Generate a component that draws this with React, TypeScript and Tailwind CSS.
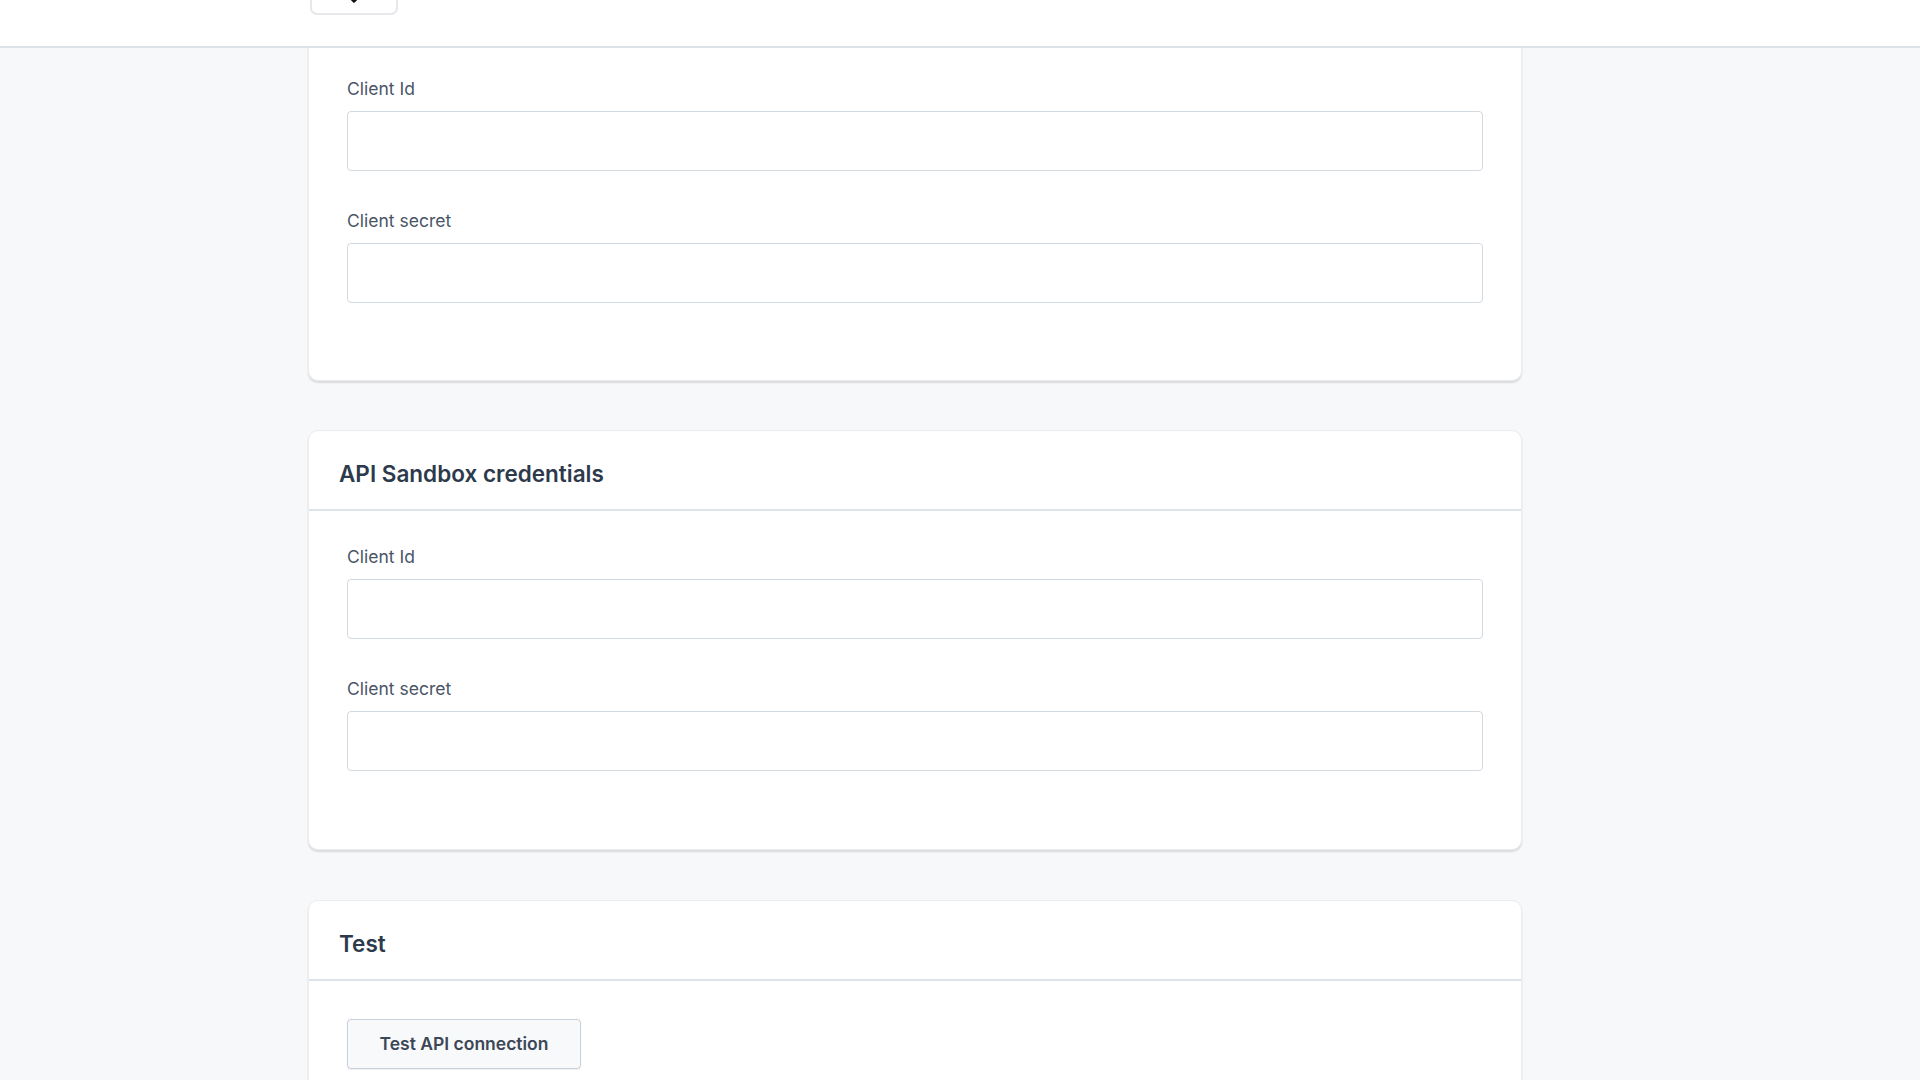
import React from "react";

function Field({ label, first }: { label: string; first?: boolean }) {
  return (
    <div className={first ? "flex flex-col" : "flex flex-col mt-[40px]"}>
      <label className="text-[17.5px] leading-[20px] text-[#4a5568]">{label}</label>
      <input
        type="text"
        className="mt-[12px] h-[60px] w-full rounded-[4px] border border-[#d3d9e1] bg-white outline-none"
      />
    </div>
  );
}

function CardHeader({ title }: { title: string }) {
  return (
    <div className="h-[80px] flex items-center pt-[8px] px-[30px] border-b-2 border-[#dde3ea]">
      <h2 className="text-[22.5px] font-semibold text-[#2d3a4b] leading-none">{title}</h2>
    </div>
  );
}

export default function App() {
  return (
    <div
      className="min-h-screen bg-[#f7f8fa] overflow-hidden"
      style={{ fontFamily: "Inter, 'Noto Sans', sans-serif" }}
    >
      <header className="h-[48px] bg-white border-b-2 border-[#dde2e8] flex items-start pl-[310px] relative z-10">
        <button className="-mt-[22px] w-[88px] h-[37px] rounded-[7px] border-2 border-[#e6e8eb] bg-white flex items-end justify-center pb-[6px]">
          <svg width="14" height="14" viewBox="0 0 24 24" fill="none" stroke="#111" strokeWidth="3.5" strokeLinecap="round" strokeLinejoin="round">
            <path d="M6 9l6 6 6-6" />
          </svg>
        </button>
      </header>
      <main className="w-[1214px] ml-[308px] flex flex-col -mt-[2px]">
        <section className="bg-white border-x border-b border-[#eaecef] rounded-b-[10px] shadow-[0_2px_2px_rgba(0,0,0,0.12)] pt-[33px] pb-[77px] px-[38px]">
          <Field label="Client Id" first />
          <Field label="Client secret" />
        </section>

        <section className="mt-[49px] bg-white border border-[#eaecef] rounded-[10px] shadow-[0_2px_2px_rgba(0,0,0,0.12)]">
          <CardHeader title="API Sandbox credentials" />
          <div className="pt-[36px] pb-[78px] px-[38px]">
            <Field label="Client Id" first />
            <Field label="Client secret" />
          </div>
        </section>

        <section className="mt-[50px] bg-white border border-[#eaecef] rounded-[10px] shadow-[0_2px_2px_rgba(0,0,0,0.12)]">
          <CardHeader title="Test" />
          <div className="pt-[38px] pb-[40px] px-[38px]">
            <button className="w-[234px] h-[50px] rounded-[4px] border border-[#c9d0d9] bg-[#f8f9fb] text-[17.5px] font-semibold text-[#3c4757] shadow-[0_1px_1px_rgba(0,0,0,0.06)]">
              Test API connection
            </button>
          </div>
        </section>
      </main>
    </div>
  );
}
